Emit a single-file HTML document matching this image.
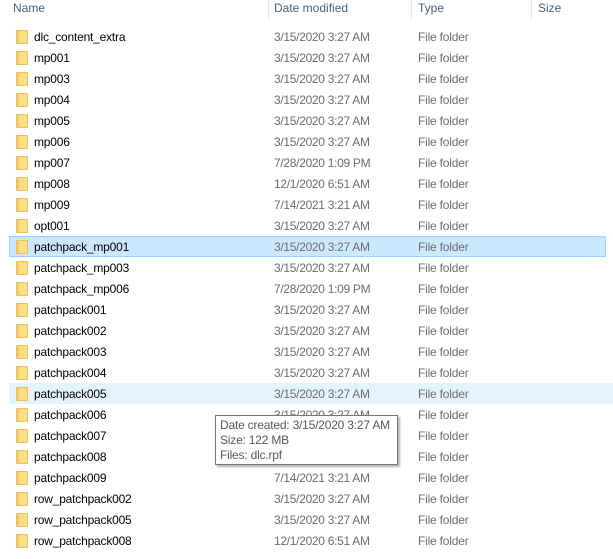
<!DOCTYPE html>
<html><head><style>
*{margin:0;padding:0;box-sizing:border-box}
body{width:613px;height:559px;background:#fff;font-family:"Liberation Sans",sans-serif;font-size:12px;position:relative;overflow:hidden}
.h{position:absolute;top:1px;color:#4c607a;font-size:12px}
.sep{position:absolute;top:0;width:1px;height:20px;background:#e5e5e5}
.r{position:absolute;left:9px;width:604px;height:21px}
.sel{background:#cce8ff;border:1px solid #99d1ff;width:597px}
.hov{background:#e5f3ff}
.f{position:absolute;left:16px;width:12px;height:14px;background:#fbdf86;border:1px solid #e9c060;border-radius:1px}
.f:before{content:"";position:absolute;left:0;top:0;width:2px;height:12px;background:#f0c968}
.n{position:absolute;left:34px;color:#000;letter-spacing:-0.2px}
.d{position:absolute;left:274px;color:#6d6d6d;letter-spacing:-0.3px}
.t{position:absolute;left:418px;color:#6d6d6d;letter-spacing:-0.2px}
.tip{position:absolute;left:215px;top:415px;width:183px;height:50px;background:#fff;border:1px solid #767676;box-shadow:2px 2px 2px rgba(0,0,0,.3);padding:2px 4px;line-height:15px;color:#575757;font-size:12px;letter-spacing:-0.2px}
</style></head><body>
<div class="h" style="left:13px">Name</div>
<div class="sep" style="left:268px"></div>
<div class="h" style="left:274px">Date modified</div>
<div class="sep" style="left:411px"></div>
<div class="h" style="left:418px">Type</div>
<div class="sep" style="left:531px"></div>
<div class="h" style="left:538px">Size</div>
<div class="r sel" style="top:236px"></div>
<div class="r hov" style="top:383px"></div>
<div id="rows"></div>
<script>
var d=[["dlc_content_extra","3/15/2020 3:27 AM"],["mp001","3/15/2020 3:27 AM"],["mp003","3/15/2020 3:27 AM"],["mp004","3/15/2020 3:27 AM"],["mp005","3/15/2020 3:27 AM"],["mp006","3/15/2020 3:27 AM"],["mp007","7/28/2020 1:09 PM"],["mp008","12/1/2020 6:51 AM"],["mp009","7/14/2021 3:21 AM"],["opt001","3/15/2020 3:27 AM"],["patchpack_mp001","3/15/2020 3:27 AM"],["patchpack_mp003","3/15/2020 3:27 AM"],["patchpack_mp006","7/28/2020 1:09 PM"],["patchpack001","3/15/2020 3:27 AM"],["patchpack002","3/15/2020 3:27 AM"],["patchpack003","3/15/2020 3:27 AM"],["patchpack004","3/15/2020 3:27 AM"],["patchpack005","3/15/2020 3:27 AM"],["patchpack006","3/15/2020 3:27 AM"],["patchpack007","3/15/2020 3:27 AM"],["patchpack008","3/15/2020 3:27 AM"],["patchpack009","7/14/2021 3:21 AM"],["row_patchpack002","3/15/2020 3:27 AM"],["row_patchpack005","3/15/2020 3:27 AM"],["row_patchpack008","12/1/2020 6:51 AM"]];
var h="";d.forEach(function(x,i){var y=37+21*i;
h+='<div class="f" style="top:'+(y-7)+'px"></div><div class="n" style="top:'+(y-7)+'px">'+x[0]+'</div><div class="d" style="top:'+(y-7)+'px">'+x[1]+'</div><div class="t" style="top:'+(y-7)+'px">File folder</div>';});
document.getElementById("rows").innerHTML=h;
</script>
<div class="tip">Date created: 3/15/2020 3:27 AM<br>Size: 122 MB<br>Files: dlc.rpf</div>
</body></html>
